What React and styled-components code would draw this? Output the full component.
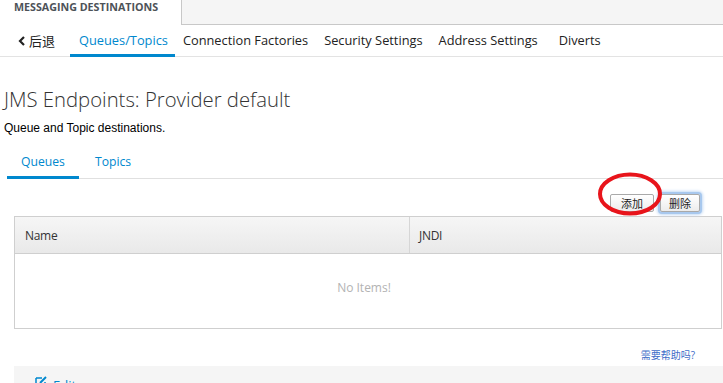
import React from "react";
import styled, { createGlobalStyle } from "styled-components";

const GlobalStyle = createGlobalStyle`
  body {
    margin: 0;
    background: #fff;
    font-family: "Open Sans", "Noto Sans CJK SC", sans-serif;
    overflow: hidden;
  }
`;

const color = {
  blue: "#0088ce",
  text: "#363636",
  border: "#d1d1d1",
  light: "#f5f5f5",
};

const Page = styled.div`
  width: 723px;
  height: 383px;
  overflow: hidden;
`;

const TopBar = styled.div`
  display: flex;
  height: 25px;
`;

const TopTab = styled.div`
  width: 181px;
  padding: 1px 0 0 14px;
  box-sizing: border-box;
  font-size: 10.7px;
  font-weight: 700;
  color: #4d5258;
  line-height: 13px;
`;

const TopFill = styled.div`
  flex: 1;
  background: ${color.light};
  border-left: 1px solid #c8c8c8;
  border-bottom: 1px solid #c8c8c8;
`;

const Nav = styled.div`
  display: flex;
  align-items: stretch;
  height: 31px;
  border-bottom: 1px solid #e3e3e3;
  padding-left: 18px;
`;

const NavItem = styled.div`
  display: flex;
  align-items: center;
  padding: 1px ${(p) => p.$padRight ?? 8}px 0 ${(p) => p.$padLeft ?? 8}px;
  margin-left: ${(p) => p.$gap ?? 0}px;
  font-size: 12.8px;
  color: ${(p) => (p.$active ? color.blue : "#222")};
  border-bottom: 3px solid ${(p) => (p.$active ? color.blue : "transparent")};
  margin-bottom: -1px;
  white-space: nowrap;
`;

const Back = styled.div`
  display: flex;
  align-items: center;
  gap: 3px;
  font-size: 13px;
  color: #222;
  margin-right: 15px;
`;

const Content = styled.div`
  padding-left: 4px;
`;

const Title = styled.h1`
  margin: 28px 0 0;
  font-size: 20.3px;
  font-weight: 300;
  color: #333;
  line-height: 28px;
`;

const Sub = styled.p`
  margin: 8px 0 0;
  font-family: "Liberation Sans", Arial, sans-serif;
  font-size: 12px;
  color: #000;
`;

const Tabs = styled.div`
  display: flex;
  margin-top: 11px;
  margin-left: 3px;
  border-bottom: 1px solid #e0e0e0;
  height: 32px;
`;

const Tab = styled.div`
  display: flex;
  align-items: center;
  padding: 0 ${(p) => p.$pad}px 0 ${(p) => p.$padLeft}px;
  font-size: 12.2px;
  color: ${color.blue};
  border-bottom: 3px solid ${(p) => (p.$active ? color.blue : "transparent")};
  margin-bottom: -1px;
`;

const Panel = styled.div`
  margin-left: 10px;
`;

const Actions = styled.div`
  position: relative;
  display: flex;
  justify-content: flex-end;
  gap: 6px;
  padding: 13px 23px 0 0;
  height: 22px;
`;

const Btn = styled.button`
  font-family: "Noto Sans CJK SC", sans-serif;
  font-size: 11px;
  color: #222;
  background: linear-gradient(#ffffff, #ececec);
  border: 1px solid #a9a9a9;
  border-radius: 2px;
  height: 18px;
  padding: 0 ${(p) => p.$pad}px;
  line-height: 14px;
  margin-top: 2px;
  box-shadow: ${(p) => (p.$focus ? "0 0 0 2px #a8c8ee, 0 0 3px 3px #c5dbf5" : "none")};
`;

const Ring = styled.svg`
  position: absolute;
  left: ${(p) => p.$x}px;
  top: -9px;
  pointer-events: none;
`;

const Table = styled.div`
  margin-top: 2px;
  border: 1px solid #cfcfcf;
  margin-right: 1px;
`;

const Head = styled.div`
  display: grid;
  grid-template-columns: 394px 1fr;
  height: 36px;
  background: linear-gradient(#f6f6f6, #e9e9e9);
  border-bottom: 1px solid #cfcfcf;
`;

const HeadCell = styled.div`
  display: flex;
  align-items: center;
  padding-left: ${(p) => p.$pad}px;
  font-size: 12px;
  color: #333;
  letter-spacing: -0.3px;
  border-left: ${(p) => (p.$divider ? "1px solid #d6d6d6" : "none")};
`;

const Empty = styled.div`
  height: 74px;
  box-sizing: border-box;
  padding: 0 8px 8px 0;
  display: flex;
  align-items: center;
  justify-content: center;
  font-size: 12px;
  color: #b3b3b3;
`;

const Help = styled.div`
  text-align: right;
  margin: 19px 28px 0 0;
  font-size: 10px;
  color: #3d6dc8;
  line-height: 14px;
`;

const Footer = styled.div`
  margin-top: 4px;
  background: ${color.light};
  height: 40px;
  padding: 10px 0 0 21px;
  display: flex;
  gap: 6px;
  font-size: 13px;
  color: ${color.blue};
`;

const Chevron = () => (
  <svg width="8" height="10" viewBox="0 0 8 10">
    <path d="M6 1 L2 5 L6 9" stroke="#222" strokeWidth="2.2" fill="none" />
  </svg>
);

const EditIcon = () => (
  <svg width="12" height="12" viewBox="0 0 12 12">
    <path d="M1 2 H7 M1 2 V11 H10 V6" stroke={color.blue} strokeWidth="1.5" fill="none" />
    <path d="M5 7 L11 1" stroke={color.blue} strokeWidth="2" />
  </svg>
);

export default function App() {
  return (
    <Page>
      <GlobalStyle />
      <TopBar>
        <TopTab>MESSAGING DESTINATIONS</TopTab>
        <TopFill />
      </TopBar>
      <Nav>
        <Back>
          <Chevron />
          <span>后退</span>
        </Back>
        <NavItem $active $padLeft={9} $padRight={7.5}>Queues/Topics</NavItem>
        <NavItem $padLeft={7.5}>Connection Factories</NavItem>
        <NavItem>Security Settings</NavItem>
        <NavItem>Address Settings</NavItem>
        <NavItem $gap={5}>Diverts</NavItem>
      </Nav>
      <Content>
        <Title>JMS Endpoints: Provider default</Title>
        <Sub>Queue and Topic destinations.</Sub>
        <Tabs>
          <Tab $active $padLeft={14} $pad={14}>Queues</Tab>
          <Tab $padLeft={16} $pad={14}>Topics</Tab>
        </Tabs>
        <Panel>
          <Actions>
            <Btn $pad={10}>添加</Btn>
            <Btn $pad={8} $focus>删除</Btn>
            <Ring $x={582} width="68" height="48" viewBox="0 0 68 48">
              <ellipse cx="34" cy="24" rx="30" ry="19.5" stroke="#e8141b" strokeWidth="4" fill="none" />
            </Ring>
          </Actions>
          <Table>
            <Head>
              <HeadCell $pad={10}>Name</HeadCell>
              <HeadCell $pad={9} $divider>JNDI</HeadCell>
            </Head>
            <Empty>No Items!</Empty>
          </Table>
          <Help>需要帮助吗?</Help>
          <Footer>
            <EditIcon />
            <span>Edit</span>
          </Footer>
        </Panel>
      </Content>
    </Page>
  );
}
